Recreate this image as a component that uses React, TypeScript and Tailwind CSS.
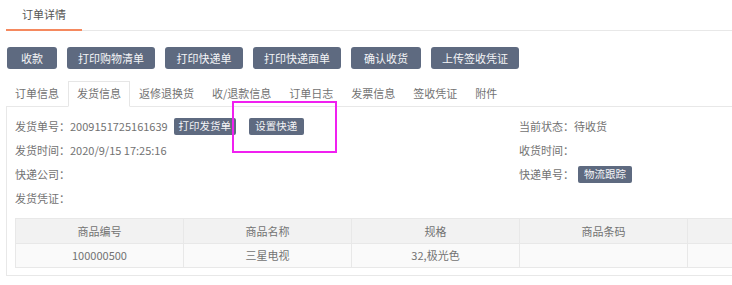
const actions = [
  { label: "收款", w: "w-[50px]" },
  { label: "打印购物清单", w: "w-[88px]" },
  { label: "打印快递单", w: "w-[78px]" },
  { label: "打印快递面单", w: "w-[88px]" },
  { label: "确认收货", w: "w-[70px]" },
  { label: "上传签收凭证", w: "w-[88px]" },
];

const tabs = ["订单信息", "发货信息", "返修退换货", "收/退款信息", "订单日志", "发票信息", "签收凭证", "附件"];

const columns = ["商品编号", "商品名称", "规格", "商品条码", ""];
const rows = [["100000500", "三星电视", "32,极光色", "", ""]];

function SmallButton({ children, w }: { children: React.ReactNode; w: string }) {
  return (
    <span
      className={`${w} inline-flex h-[17px] items-center justify-center rounded-[2px] bg-[#5e6a80] text-[10.5px] text-[#f4f5f7]`}
    >
      {children}
    </span>
  );
}

export default function App() {
  return (
    <div
      className="relative h-[285px] w-[732px] overflow-hidden bg-white text-[11px] text-[#727272]"
      style={{ fontFamily: '"Noto Sans CJK SC", "Noto Sans", sans-serif' }}
    >
      <div className="w-[900px] pl-[6px]">
        {/* page tab */}
        <div className="flex h-[31px] border-b border-[#e8e8e8]">
          <div className="-mb-px w-[76px] border-b-2 border-[#f5895e] text-center leading-[29px] text-[#555]">
            订单详情
          </div>
        </div>

        {/* actions */}
        <div className="mt-[16px] flex gap-[10px] pl-px">
          {actions.map((a) => (
            <button
              key={a.label}
              className={`${a.w} h-[22px] rounded-[3px] bg-[#5e6a80] text-[11px] text-[#f4f5f7]`}
            >
              {a.label}
            </button>
          ))}
        </div>

        {/* tabs */}
        <div className="mt-[12px] flex h-[25px]">
          {tabs.map((t, i) => (
            <div
              key={t}
              className={
                i === 1
                  ? "relative z-10 -mb-px h-[26px] border border-b-white border-[#e6e6e6] bg-white px-[8px] leading-[23px]"
                  : "h-[25px] border border-transparent px-[8px] leading-[23px]"
              }
            >
              {t}
            </div>
          ))}
        </div>

        {/* panel */}
        <div className="border border-[#e8e8e8] px-[8px] pt-[7px] pb-[7px]">
          <div className="flex">
            <div className="w-[504px]">
              <div className="flex h-[24px] items-center">
                <span>发货单号：2009151725161639</span>
                <span className="ml-[6px]">
                  <SmallButton w="w-[62px]">打印发货单</SmallButton>
                </span>
                <span className="ml-[13px]">
                  <SmallButton w="w-[55px]">设置快递</SmallButton>
                </span>
              </div>
              <div className="flex h-[24px] items-center">发货时间：2020/9/15 17:25:16</div>
              <div className="flex h-[24px] items-center">快递公司：</div>
              <div className="flex h-[24px] items-center">发货凭证：</div>
            </div>
            <div>
              <div className="flex h-[24px] items-center">当前状态：待收货</div>
              <div className="flex h-[24px] items-center">收货时间：</div>
              <div className="flex h-[24px] items-center">
                快递单号：
                <span className="ml-[4px]">
                  <SmallButton w="w-[54px]">物流跟踪</SmallButton>
                </span>
              </div>
            </div>
          </div>

          <table className="mt-[8px] border-collapse">
            <thead>
              <tr className="h-[25px] bg-[#f2f2f2]">
                {columns.map((c, i) => (
                  <th key={i} className="w-[168px] border border-[#e8e8e8] p-0 text-center font-normal">
                    {c}
                  </th>
                ))}
              </tr>
            </thead>
            <tbody>
              {rows.map((r, i) => (
                <tr key={i} className="h-[24px] bg-[#fafafa]">
                  {r.map((v, j) => (
                    <td key={j} className="w-[168px] border border-[#e8e8e8] p-0 text-center">
                      {v}
                    </td>
                  ))}
                </tr>
              ))}
            </tbody>
          </table>
        </div>
      </div>

      {/* annotation box */}
      <div className="absolute left-[232px] top-[101px] h-[52px] w-[105px] border-2 border-[#f020f0]" />
    </div>
  );
}
